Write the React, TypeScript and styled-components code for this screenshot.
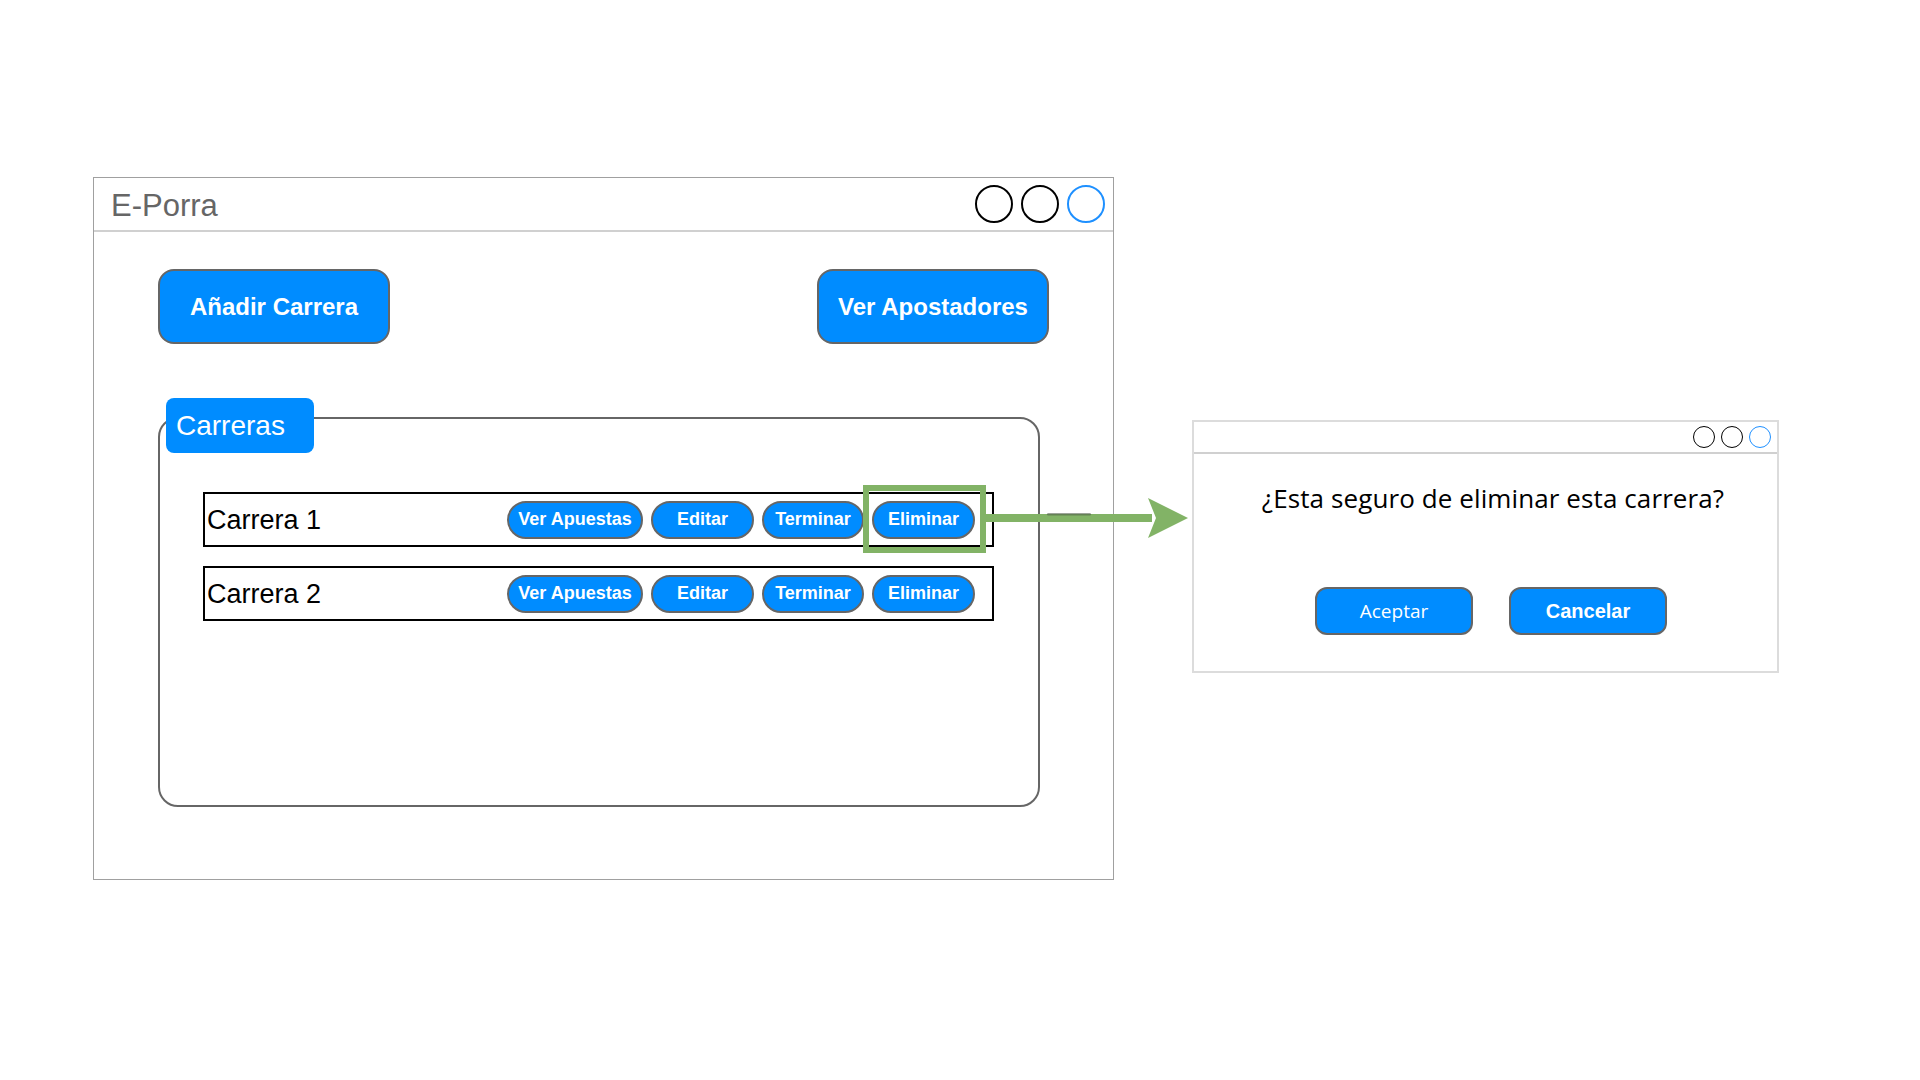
import React from "react";
import styled, { createGlobalStyle } from "styled-components";

const GlobalStyle = createGlobalStyle`
  html, body {
    margin: 0;
    padding: 0;
    background: #ffffff;
  }
  body {
    width: 1920px;
    height: 1080px;
    overflow: hidden;
    font-family: "Liberation Sans", Arial, sans-serif;
  }
`;

const BLUE = "#008cff";

// lienzo
const Canvas = styled.div`
  display: flex;
  align-items: flex-start;
  padding: 177px 0 0 93px;
`;

// ventana principal
const MainWindow = styled.div`
  box-sizing: border-box;
  width: 1021px;
  height: 703px;
  border: 1px solid #a0a0a0;
  display: flex;
  flex-direction: column;
`;

const TitleBar = styled.div<{ $h: number; $pad: number }>`
  box-sizing: border-box;
  height: ${(p) => p.$h}px;
  flex-shrink: 0;
  display: flex;
  align-items: center;
  justify-content: space-between;
  padding: 0 ${(p) => p.$pad}px 0 17px;
  border-bottom: 2px solid #d0d0d0;
`;

const Title = styled.span`
  font-size: 31px;
  color: #666666;
  padding-top: 3px;
`;

const Controls = styled.div<{ $gap: number }>`
  display: flex;
  gap: ${(p) => p.$gap}px;
  margin-left: auto;
`;

const Dot = styled.span<{ $size: number; $blue?: boolean }>`
  box-sizing: border-box;
  width: ${(p) => p.$size}px;
  height: ${(p) => p.$size}px;
  border-radius: 50%;
  border: ${(p) => (p.$size > 30 ? 2 : 1.5)}px solid
    ${(p) => (p.$blue ? "#1e90ff" : "#000000")};
`;

const Body = styled.div`
  padding: 37px 64px 0 64px;
  display: flex;
  flex-direction: column;
`;

const TopActions = styled.div`
  display: flex;
  justify-content: space-between;
`;

const BigButton = styled.button`
  box-sizing: border-box;
  width: 232px;
  height: 75px;
  border: 2px solid #666666;
  border-radius: 16px;
  background: ${BLUE};
  color: #ffffff;
  font-family: "Liberation Sans", Arial, sans-serif;
  font-weight: bold;
  font-size: 24px;
  padding: 0;
`;

// grupo de carreras
const GroupBox = styled.div`
  position: relative;
  box-sizing: border-box;
  width: 882px;
  height: 390px;
  margin-top: 73px;
  border: 2px solid #666666;
  border-radius: 20px;
  padding: 73px 44px 0 43px;
`;

const GroupTab = styled.div`
  position: absolute;
  top: -21px;
  left: 6px;
  box-sizing: border-box;
  width: 148px;
  height: 55px;
  border-radius: 8px;
  background: ${BLUE};
  color: #ffffff;
  font-size: 28px;
  display: flex;
  align-items: center;
  padding-left: 10px;
`;

const RowList = styled.div`
  display: flex;
  flex-direction: column;
  gap: 19px;
`;

const RaceRow = styled.div`
  box-sizing: border-box;
  height: 55px;
  border: 2px solid #000000;
  display: flex;
  align-items: center;
  padding: 2px 17px 0 2px;
`;

const RaceName = styled.span`
  font-size: 27px;
  color: #000000;
`;

const RowActions = styled.div`
  margin-left: auto;
  display: flex;
  gap: 8px;
  margin-top: -2px;
`;

const PillButton = styled.button<{ $w: number }>`
  box-sizing: border-box;
  width: ${(p) => p.$w}px;
  height: 38px;
  border: 2px solid #666666;
  border-radius: 19px;
  background: ${BLUE};
  color: #ffffff;
  font-family: "Liberation Sans", Arial, sans-serif;
  font-weight: bold;
  font-size: 18px;
  padding: 0;
`;

const Highlighted = styled.div`
  position: relative;
  display: flex;
  z-index: 2;
`;

const HighlightFrame = styled.div`
  position: absolute;
  top: -16px;
  bottom: -14px;
  left: -9px;
  right: -11px;
  border: 6px solid #82b366;
  pointer-events: none;
`;

const ArrowSvg = styled.svg`
  position: absolute;
  left: calc(100% + 11px);
  top: 50%;
  margin-top: -24px;
  overflow: visible;
`;

// dialogo
const Dialog = styled.div`
  box-sizing: border-box;
  width: 587px;
  height: 253px;
  margin: 243px 0 0 78px;
  border: 2px solid #dcdcdc;
  display: flex;
  flex-direction: column;
`;

const DialogBody = styled.div`
  display: flex;
  flex-direction: column;
  align-items: center;
  padding: 28px 0 0 11px;
`;

const Question = styled.p`
  margin: 0;
  font-family: "Open Sans", "Noto Sans", sans-serif;
  font-size: 26px;
  line-height: 32px;
  color: #000000;
  letter-spacing: 0.1px;
  padding-left: 4px;
`;

const DialogActions = styled.div`
  display: flex;
  gap: 36px;
  margin-top: 73px;
`;

const DialogButton = styled.button<{ $bold?: boolean }>`
  box-sizing: border-box;
  width: 158px;
  height: 48px;
  border: 2px solid #666666;
  border-radius: 12px;
  background: ${BLUE};
  color: #ffffff;
  padding: 0;
  font-family: ${(p) =>
    p.$bold ? `"Liberation Sans", Arial, sans-serif` : `"Open Sans", sans-serif`};
  font-weight: ${(p) => (p.$bold ? "bold" : "normal")};
  font-size: ${(p) => (p.$bold ? 20 : 19)}px;
`;

const Arrow: React.FC = () => (
  <ArrowSvg width="202" height="44" viewBox="0 0 202 44">
    <rect x="0" y="18" width="166" height="8" fill="#82b366" />
    <rect x="61" y="17" width="44" height="2.5" rx="1.2" fill="#4d5a45" opacity="0.55" />
    <polygon points="162,2 202,22 162,42 170,22" fill="#82b366" />
  </ArrowSvg>
);

const races = ["Carrera 1", "Carrera 2"];

const App: React.FC = () => {
  return (
    <>
      <GlobalStyle />
      <Canvas>
        <MainWindow>
          <TitleBar $h={54} $pad={8}>
            <Title>E-Porra</Title>
            <Controls $gap={8}>
              <Dot $size={38} />
              <Dot $size={38} />
              <Dot $size={38} $blue />
            </Controls>
          </TitleBar>
          <Body>
            <TopActions>
              <BigButton>Añadir Carrera</BigButton>
              <BigButton>Ver Apostadores</BigButton>
            </TopActions>
            <GroupBox>
              <GroupTab>Carreras</GroupTab>
              <RowList>
                {races.map((name, i) => (
                  <RaceRow key={name}>
                    <RaceName>{name}</RaceName>
                    <RowActions>
                      <PillButton $w={136}>Ver Apuestas</PillButton>
                      <PillButton $w={103}>Editar</PillButton>
                      <PillButton $w={102}>Terminar</PillButton>
                      {i === 0 ? (
                        <Highlighted>
                          <PillButton $w={103}>Eliminar</PillButton>
                          <HighlightFrame />
                          <Arrow />
                        </Highlighted>
                      ) : (
                        <PillButton $w={103}>Eliminar</PillButton>
                      )}
                    </RowActions>
                  </RaceRow>
                ))}
              </RowList>
            </GroupBox>
          </Body>
        </MainWindow>

        <Dialog>
          <TitleBar $h={32} $pad={6}>
            <Controls $gap={6}>
              <Dot $size={22} />
              <Dot $size={22} />
              <Dot $size={22} $blue />
            </Controls>
          </TitleBar>
          <DialogBody>
            <Question>¿Esta seguro de eliminar esta carrera?</Question>
            <DialogActions>
              <DialogButton>Aceptar</DialogButton>
              <DialogButton $bold>Cancelar</DialogButton>
            </DialogActions>
          </DialogBody>
        </Dialog>
      </Canvas>
    </>
  );
};

export default App;
